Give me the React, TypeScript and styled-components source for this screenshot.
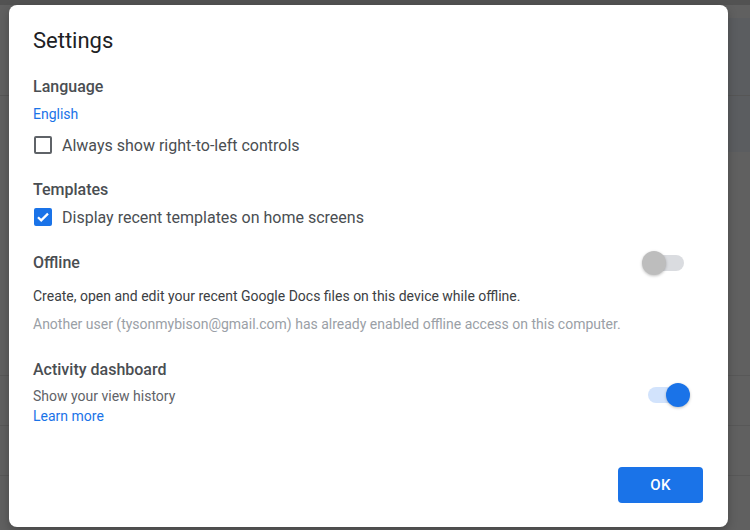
import React, { useState } from "react";
import styled, { createGlobalStyle } from "styled-components";

const GlobalStyle = createGlobalStyle`
  html, body { margin: 0; padding: 0; }
  body { font-family: Roboto, "Liberation Sans", Arial, sans-serif; background: #606060; }
  * { box-sizing: border-box; }
`;

const Backdrop = styled.div`
  width: 750px;
  height: 530px;
  padding: 5px 22px 3px 9px;
  background-color: #606060;
  background-image:
    linear-gradient(#565656, #565656),
    linear-gradient(#585858, #585858),
    linear-gradient(#585858, #585858),
    linear-gradient(#585858, #585858),
    linear-gradient(#5b5d60, #5b5d60),
    linear-gradient(#525252, #525252);
  background-size: 100% 1px, 100% 1px, 100% 1px, 100% 1px, 40px 134px, 100% 5px;
  background-position: 0 95px, 0 375px, 0 425px, 0 475px, right 0 top 18px, 0 0;
  background-repeat: no-repeat;
  overflow: hidden;
`;

const Dialog = styled.div`
  width: 719px;
  height: 522px;
  background: #ffffff;
  border-radius: 8px;
  box-shadow: 0 4px 10px rgba(0, 0, 0, 0.25);
  padding: 22px 25px 24px 24px;
  display: flex;
  flex-direction: column;
`;

const Title = styled.h1`
  margin: 0;
  font-size: 22px;
  line-height: 28px;
  font-weight: 400;
  color: #202124;
`;

const Heading = styled.div<{ $mt: number }>`
  margin-top: ${(p) => p.$mt}px;
  font-size: 16px;
  line-height: 24px;
  font-weight: 500;
  color: #4a4e52;
`;

const Link = styled.a<{ $mt?: number }>`
  display: block;
  margin-top: ${(p) => p.$mt ?? 0}px;
  font-size: 14px;
  line-height: 20px;
  color: #1a73e8;
  text-decoration: none;
`;

const CheckRow = styled.label<{ $mt: number }>`
  margin-top: ${(p) => p.$mt}px;
  display: flex;
  align-items: center;
  gap: 10px;
  height: 24px;
  padding-left: 1px;
  font-size: 16px;
  color: #4a4e52;
`;

const Box = styled.span<{ $checked: boolean }>`
  width: 18px;
  height: 18px;
  border-radius: 2px;
  border: 2px solid ${(p) => (p.$checked ? "#1a73e8" : "#5f6368")};
  background: ${(p) => (p.$checked ? "#1a73e8" : "#fff")};
  display: flex;
  align-items: center;
  justify-content: center;
  flex: none;
`;

const SectionRow = styled.div<{ $mt: number; $align?: string }>`
  margin-top: ${(p) => p.$mt}px;
  display: flex;
  justify-content: space-between;
  align-items: ${(p) => p.$align ?? "center"};
  padding-right: 13px;
`;

const Body = styled.p<{ $mt: number; $muted?: boolean }>`
  margin: ${(p) => p.$mt}px 0 0;
  font-size: 14px;
  line-height: 20px;
  color: ${(p) => (p.$muted ? "#9aa0a6" : "#3c4043")};
`;

const Sub = styled.div`
  font-size: 14px;
  line-height: 20px;
  color: #5f6368;
`;

const SwitchWrap = styled.button<{ $on: boolean; $mt?: number }>`
  position: relative;
  width: 48px;
  height: 24px;
  margin-top: ${(p) => p.$mt ?? 0}px;
  padding: 0;
  border: none;
  background: transparent;
  flex: none;
  cursor: pointer;
`;

const Track = styled.span<{ $on: boolean }>`
  position: absolute;
  left: 6px;
  right: 6px;
  top: 4px;
  height: 16px;
  border-radius: 8px;
  background: ${(p) => (p.$on ? "#d2e3fc" : "#dadce0")};
`;

const Thumb = styled.span<{ $on: boolean }>`
  position: absolute;
  top: 0;
  left: ${(p) => (p.$on ? 24 : 0)}px;
  width: 24px;
  height: 24px;
  border-radius: 50%;
  background: ${(p) => (p.$on ? "#1a73e8" : "#bdbdbd")};
  box-shadow: 0 1px 3px rgba(0, 0, 0, 0.25);
`;

const Footer = styled.div`
  margin-top: auto;
  display: flex;
  justify-content: flex-end;
`;

const OkButton = styled.button`
  width: 85px;
  height: 36px;
  border: none;
  border-radius: 4px;
  background: #1a73e8;
  color: #fff;
  font-family: Roboto, "Liberation Sans", Arial, sans-serif;
  font-size: 15px;
  font-weight: 500;
  letter-spacing: 0.3px;
  cursor: pointer;
`;

const Switch = ({ on, mt, onClick }: { on: boolean; mt?: number; onClick: () => void }) => (
  <SwitchWrap $on={on} $mt={mt} onClick={onClick} role="switch" aria-checked={on}>
    <Track $on={on} />
    <Thumb $on={on} />
  </SwitchWrap>
);

const Check = () => (
  <svg width="14" height="14" viewBox="0 0 14 14">
    <path d="M2 7.2l3.2 3.2L12 3.6" fill="none" stroke="#fff" strokeWidth="2.2" />
  </svg>
);

export default function App() {
  const [rtl, setRtl] = useState(false);
  const [tpl, setTpl] = useState(true);
  const [offline, setOffline] = useState(false);
  const [activity, setActivity] = useState(true);

  return (
    <>
      <GlobalStyle />
      <Backdrop>
        <Dialog>
          <Title>Settings</Title>
          <Heading $mt={20}>Language</Heading>
          <Link $mt={5} href="#">English</Link>
          <CheckRow $mt={9} onClick={() => setRtl(!rtl)}>
            <Box $checked={rtl}>{rtl && <Check />}</Box>
            Always show right-to-left controls
          </CheckRow>
          <Heading $mt={21}>Templates</Heading>
          <CheckRow $mt={3} onClick={() => setTpl(!tpl)}>
            <Box $checked={tpl}>{tpl && <Check />}</Box>
            Display recent templates on home screens
          </CheckRow>
          <SectionRow $mt={22}>
            <Heading $mt={0}>Offline</Heading>
            <Switch on={offline} onClick={() => setOffline(!offline)} />
          </SectionRow>
          <Body $mt={11}>Create, open and edit your recent Google Docs files on this device while offline.</Body>
          <Body $mt={8} $muted>
            Another user (tysonmybison@gmail.com) has already enabled offline access on this computer.
          </Body>
          <Heading $mt={24}>Activity dashboard</Heading>
          <SectionRow $mt={4} $align="flex-start">
            <div>
              <Sub>Show your view history</Sub>
              <Link href="#">Learn more</Link>
            </div>
            <Switch on={activity} mt={-3} onClick={() => setActivity(!activity)} />
          </SectionRow>
          <Footer>
            <OkButton>OK</OkButton>
          </Footer>
        </Dialog>
      </Backdrop>
    </>
  );
}
